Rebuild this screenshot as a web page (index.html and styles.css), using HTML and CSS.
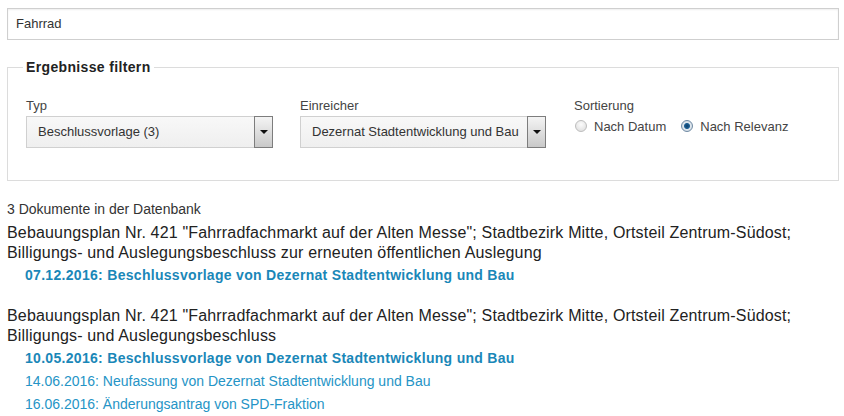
FILE: index.html
```html
<!DOCTYPE html>
<html lang="de">
<head>
<meta charset="utf-8">
<title>Suche</title>
<link rel="stylesheet" href="styles.css">
</head>
<body>
<div class="page">
  <div class="search">Fahrrad</div>

  <fieldset class="filter">
    <legend class="filter-legend">Ergebnisse filtern</legend>
    <div class="filter-row">
      <div class="col col-typ">
        <div class="label">Typ</div>
        <div class="select">
          <span class="select-text">Beschlussvorlage (3)</span>
          <span class="select-btn"><span class="tri"></span></span>
        </div>
      </div>
      <div class="col col-ein">
        <div class="label">Einreicher</div>
        <div class="select">
          <span class="select-text">Dezernat Stadtentwicklung und Bau</span>
          <span class="select-btn"><span class="tri"></span></span>
        </div>
      </div>
      <div class="col col-sort">
        <div class="label">Sortierung</div>
        <div class="radios">
          <span class="radio"></span><span class="radio-label">Nach Datum</span>
          <span class="radio checked"></span><span class="radio-label">Nach Relevanz</span>
        </div>
      </div>
    </div>
  </fieldset>

  <div class="count">3 Dokumente in der Datenbank</div>

  <div class="result">
    <div class="title">Bebauungsplan Nr. 421 "Fahrradfachmarkt auf der Alten Messe"; Stadtbezirk Mitte, Ortsteil Zentrum-Südost;<br>Billigungs- und Auslegungsbeschluss zur erneuten öffentlichen Auslegung</div>
    <a class="doc bold" href="#">07.12.2016: Beschlussvorlage von Dezernat Stadtentwicklung und Bau</a>
  </div>

  <div class="result">
    <div class="title">Bebauungsplan Nr. 421 "Fahrradfachmarkt auf der Alten Messe"; Stadtbezirk Mitte, Ortsteil Zentrum-Südost;<br>Billigungs- und Auslegungsbeschluss</div>
    <a class="doc bold" href="#">10.05.2016: Beschlussvorlage von Dezernat Stadtentwicklung und Bau</a>
    <a class="doc" href="#">14.06.2016: Neufassung von Dezernat Stadtentwicklung und Bau</a>
    <a class="doc" href="#">16.06.2016: Änderungsantrag von SPD-Fraktion</a>
  </div>
</div>
</body>
</html>
```

FILE: styles.css
```css
html, body {
  margin: 0;
  padding: 0;
  background: #fff;
}
body {
  font-family: "Liberation Sans", Arial, sans-serif;
  font-size: 13px;
  color: #333;
}
.page {
  padding: 8px 5px 0 7px;
  width: 832px;
}
.search {
  height: 32px;
  box-sizing: border-box;
  border: 1px solid #cfcfcf;
  box-shadow: inset 0 1px 2px rgba(0,0,0,0.07);
  padding: 0 8px;
  line-height: 30px;
  font-size: 13px;
  color: #333;
}
.filter {
  margin: 19px 0 0 0;
  padding: 22px 18px 32px 18px;
  border: 1px solid #dcdcdc;
  min-width: 0;
}
.filter-legend {
  padding: 0 3px;
  margin-left: -3px;
  font-weight: bold;
  font-size: 14px;
  letter-spacing: 0.35px;
  line-height: 17px;
  color: #222;
}
.filter-row {
  display: flex;
}
.col-typ { width: 247px; margin-right: 27px; }
.col-ein { width: 246px; margin-right: 28px; }
.label {
  line-height: 16px;
  height: 16px;
  margin-bottom: 2px;
  color: #444;
}
.select {
  display: flex;
  height: 32px;
  box-sizing: border-box;
  border: 1px solid #d0d0d0;
  background: linear-gradient(#f8f8f8, #efefef);
}
.select-text {
  flex: 1;
  padding-left: 11px;
  line-height: 30px;
  color: #333;
  white-space: nowrap;
  overflow: hidden;
}
.select-btn {
  width: 17px;
  margin: -1px -1px -1px 0;
  border: 1px solid #7d7d7d;
  background: linear-gradient(#f4f4f4, #c9c9c9);
  display: flex;
  align-items: center;
  justify-content: center;
}
.tri {
  width: 0;
  height: 0;
  border-left: 4px solid transparent;
  border-right: 4px solid transparent;
  border-top: 4px solid #111;
}
.radios {
  display: flex;
  align-items: center;
  height: 18px;
  margin-top: 3px;
}
.radio {
  width: 10px;
  height: 10px;
  border-radius: 50%;
  border: 1px solid #bdbdbd;
  background: radial-gradient(circle at 50% 35%, #fcfcfc, #dadada);
  margin: 0 7px 0 1px;
}
.radio.checked {
  border-color: #6f8aa3;
  background: radial-gradient(circle, #0e3f6a 0, #1d5f93 2.5px, #dfe7ee 3.5px, #c4d0db 100%);
}
.radio-label {
  color: #444;
  margin-right: 14px;
}
.count {
  margin-top: 20px;
  font-size: 14px;
  line-height: 17px;
  color: #333;
}
.result {
  margin-top: 5px;
  margin-bottom: 19px;
}
.title {
  font-size: 16px;
  letter-spacing: 0.17px;
  line-height: 20px;
  margin-bottom: 1px;
  color: #222;
}
.doc {
  display: block;
  padding-left: 18px;
  font-size: 14px;
  line-height: 23px;
  color: #2594c6;
  text-decoration: none;
}
.doc.bold {
  font-weight: bold;
  letter-spacing: 0.3px;
  color: #1a87b8;
}
```
